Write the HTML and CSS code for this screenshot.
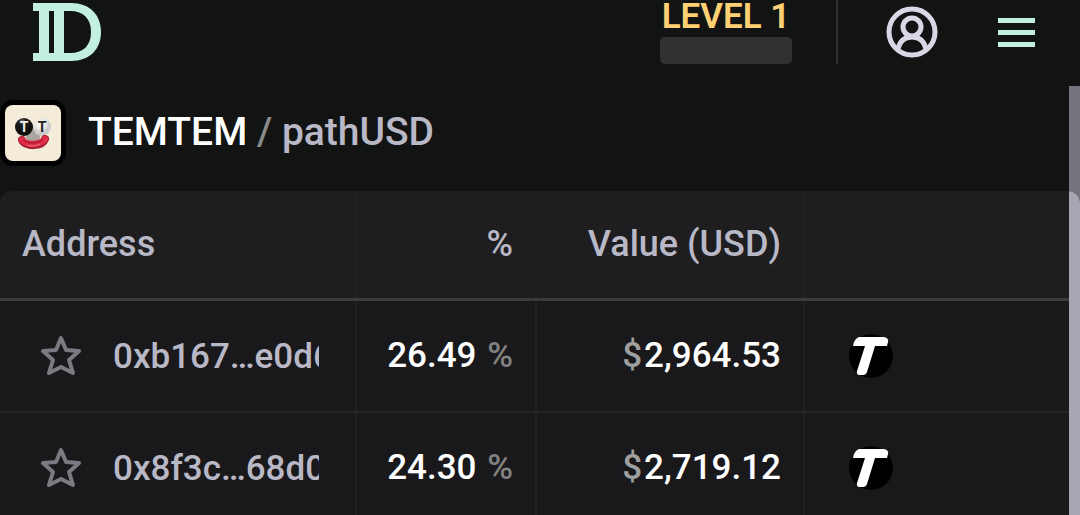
FILE: index.html
```html
<!DOCTYPE html>
<html lang="en">
<head>
    <meta charset="UTF-8">
    <meta name="viewport" content="width=device-width, initial-scale=1.0">
    <title>TEMTEM / pathUSD</title>
    <link rel="stylesheet" href="styles.css">
</head>
<body>
    <header class="topbar">
        <a class="logo" href="#" aria-label="Home">
            <svg width="68" height="58" viewBox="0 0 68 58">
                <path fill="#c3f0de" fill-rule="evenodd" d="M0 0H38C57 0 68 12 68 29S57 58 38 58H0V50H6V8H0ZM16 8V50H21V8ZM31 8V50H37C51 50 58 42 58 29S51 8 37 8Z"/>
            </svg>
        </a>
        <div class="level">
            <span>LEVEL 1</span>
            <div class="level-bar"></div>
        </div>
        <div class="divider"></div>
        <button class="icon-btn user-btn" aria-label="Account">
            <svg width="52" height="52" viewBox="0 0 52 52" fill="none" stroke="#d9d7e6" stroke-width="5">
                <circle cx="26" cy="26" r="23"/>
                <circle cx="26" cy="21" r="9"/>
                <path d="M12 43C14 34 19 31 26 31S38 34 40 43"/>
            </svg>
        </button>
        <button class="icon-btn menu-btn" aria-label="Menu">
            <svg width="37" height="29" viewBox="0 0 37 29" fill="#c3f0de">
                <rect width="37" height="5"/>
                <rect y="12" width="37" height="5"/>
                <rect y="24" width="37" height="5"/>
            </svg>
        </button>
    </header>

    <main>
        <div class="pair">
            <svg class="avatar" width="56" height="56" viewBox="0 0 56 56">
                <defs>
                    <radialGradient id="dark" cx=".4" cy=".2"><stop offset="0" stop-color="#777"/><stop offset=".4" stop-color="#1c1c1c"/><stop offset="1" stop-color="#111"/></radialGradient>
                    <radialGradient id="light" cx=".4" cy=".3"><stop offset="0" stop-color="#fff"/><stop offset=".6" stop-color="#e8e8e8"/><stop offset="1" stop-color="#ccc"/></radialGradient>
                </defs>
                <rect width="56" height="56" fill="#f4ecd8"/>
                <path d="M20 28L27 20L36 29L34 36H22Z" fill="#aaa5a0"/>
                <circle cx="37" cy="22" r="9" fill="url(#light)"/>
                <circle cx="19" cy="22" r="9" fill="url(#dark)"/>
                <text x="19" y="27" fill="#eee">T</text>
                <text x="37" y="27" fill="#222">T</text>
                <path d="M17 35C20 42 37 42 40 34" fill="none" stroke="#a91f34" stroke-width="8" stroke-linecap="round"/>
                <path d="M17 35C21 40 36 40 40 34" fill="none" stroke="#e22d47" stroke-width="6" stroke-linecap="round"/>
                <path d="M18 35C22 39 35 39 38 34" fill="none" stroke="#8e1429" stroke-width="1"/>
                <path d="M22 40C26 42 32 41 35 39" fill="none" stroke="#f27886" stroke-width="1"/>
            </svg>
            <h1>TEMTEM <span class="slash">/</span> <span class="quote">pathUSD</span></h1>
        </div>

        <div class="table-wrap">
            <table>
                <thead>
                    <tr>
                        <th class="col-address">Address</th>
                        <th class="col-percent num">%</th>
                        <th class="col-value num">Value (USD)</th>
                        <th></th>
                    </tr>
                </thead>
                <tbody>
                    <tr>
                        <td>
                            <div class="holder">
                                <button class="icon-btn" aria-label="Add to favorites">
                                    <svg width="42" height="42" viewBox="0 0 42 42"><path class="star" d="M21 3L26 15L39 16L29 25L33 38L21 32L9 38L13 25L3 16L16 15Z"/></svg>
                                </button>
                                <a href="#">0xb167…e0d6</a>
                            </div>
                        </td>
                        <td class="num">26.49 <span class="unit">%</span></td>
                        <td class="num"><span class="dollar">$</span>2,964.53</td>
                        <td>
                            <svg class="token" width="44" height="44" viewBox="0 0 44 44">
                                <circle cx="22" cy="22" r="22"/>
                                <path fill="#fff" d="M10 3H35Q40 4 39 8L38 12H26L18 38Q17 41 14 41H10Q7 40 8 37L16 12H4Q5 5 10 3Z"/>
                            </svg>
                        </td>
                    </tr>
                    <tr>
                        <td>
                            <div class="holder">
                                <button class="icon-btn" aria-label="Add to favorites">
                                    <svg width="42" height="42" viewBox="0 0 42 42"><path class="star" d="M21 3L26 15L39 16L29 25L33 38L21 32L9 38L13 25L3 16L16 15Z"/></svg>
                                </button>
                                <a href="#">0x8f3c…68d0</a>
                            </div>
                        </td>
                        <td class="num">24.30 <span class="unit">%</span></td>
                        <td class="num"><span class="dollar">$</span>2,719.12</td>
                        <td>
                            <svg class="token" width="44" height="44" viewBox="0 0 44 44">
                                <circle cx="22" cy="22" r="22"/>
                                <path fill="#fff" d="M10 3H35Q40 4 39 8L38 12H26L18 38Q17 41 14 41H10Q7 40 8 37L16 12H4Q5 5 10 3Z"/>
                            </svg>
                        </td>
                    </tr>
                </tbody>
            </table>
        </div>
    </main>
</body>
</html>
```

FILE: styles.css
```css
* {
    box-sizing: border-box;
}
body {
    margin: 0;
    height: 100vh;
    display: flex;
    flex-direction: column;
    overflow: hidden;
    background: #121413;
    color: #fff;
    font-family: Roboto, sans-serif;
    font-size: 35px;
    font-weight: 500;
}
a {
    color: inherit;
    text-decoration: none;
}
svg {
    display: block;
}
.icon-btn {
    padding: 0;
    border: none;
    background: none;
    cursor: pointer;
}

/* top bar */
.topbar {
    display: flex;
    align-items: center;
    height: 64px;
    margin-bottom: 22px;
    padding: 0 45px 0 33px;
    flex-shrink: 0;
}
.logo {
    margin-right: auto;
}
.level {
    align-self: flex-end;
    width: 132px;
    color: #ffd174;
    font-weight: 600;
    line-height: 36px;
    text-align: center;
    white-space: nowrap;
}
.level span {
    display: block;
    padding-bottom: 2px;
}
.level-bar {
    height: 27px;
    background: #303133;
    border-radius: 5px;
}
.divider {
    width: 2px;
    height: 64px;
    margin: 0 48px 0 44px;
    background: #2e3031;
}
.menu-btn {
    margin-left: 60px;
}

/* pair heading */
main {
    flex: 1;
    min-height: 0;
    overflow: hidden;
    background: linear-gradient(#74737e, #74737e) right / 11px 100% no-repeat;
}
.pair {
    display: flex;
    align-items: center;
    height: 105px;
    padding-bottom: 11px;
}
.avatar {
    box-sizing: content-box;
    border: 5px solid #000;
    border-radius: 13px;
}
.avatar text {
    font-size: 14px;
    font-weight: 700;
    text-anchor: middle;
}
h1 {
    margin: 0 0 0 22px;
    padding-bottom: 2px;
    font-size: 39px;
    font-weight: 500;
}
.slash {
    color: #8b8b8b;
}
.quote {
    color: #b9b8c6;
}

/* holders table */
.table-wrap {
    position: relative;
    overflow: hidden;
    border-radius: 12px 12px 0 0;
}
/* scroll thumb lies over the last column */
.table-wrap::after {
    content: "";
    position: absolute;
    top: 0;
    right: 0;
    width: 11px;
    height: 100%;
    background: #a8a6b3;
}
table {
    width: 100%;
    table-layout: fixed;
    border-collapse: separate;
    border-spacing: 0;
}
th, td {
    padding: 0 24px 2px 22px;
    box-shadow: inset -2px 0 #202123;
    text-align: left;
    white-space: nowrap;
}
th:last-child, td:last-child {
    box-shadow: none;
}
th {
    height: 110px;
    background: #1e1e20;
    border-bottom: 3px solid #3b3b3d;
    color: #b9b8c6;
    font-size: 36px;
    font-weight: 500;
}
td {
    height: 112px;
    background: #19191b;
    border-bottom: 2px solid #242527;
}
.col-address {
    width: 357px;
}
.col-percent {
    width: 180px;
}
.col-value {
    width: 268px;
}
.num {
    text-align: right;
}
.holder {
    display: flex;
    align-items: center;
    gap: 31px;
    padding: 2px 14px 0 18px;
    color: #b9b8c6;
}
.holder a {
    overflow: hidden;
}
.star {
    fill: none;
    stroke: #7b7a83;
    stroke-width: 4;
    stroke-linejoin: round;
}
.unit {
    margin-left: 2px;
    color: #828282;
}
.dollar {
    margin-right: 2px;
    color: #a0a0a0;
}
.token {
    margin: 2px 0 0 22px;
}
```
